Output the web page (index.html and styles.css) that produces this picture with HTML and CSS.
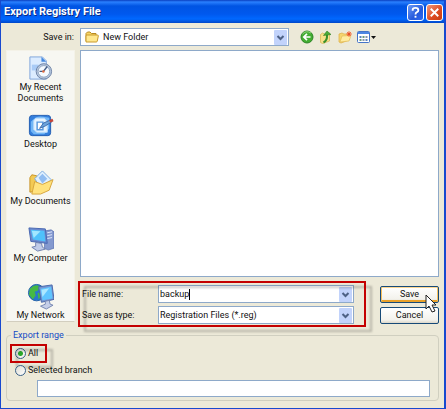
FILE: index.html
```html
<!DOCTYPE html>
<html lang="en">
<head>
<meta charset="utf-8">
<title>Export Registry File</title>
<link rel="stylesheet" href="styles.css">
</head>
<body>
<form class="window">
  <header class="titlebar">
    <h1>Export Registry File</h1>
    <button type="button" class="cap help" aria-label="Help"><svg viewBox="0 0 16 16"><path d="M5 6V5q0-2 3-2t3 2.500q0 1.500-1.500 2.200T8 10" fill="none" stroke="#fff" stroke-width="2"/><path d="M7 11.500h2v2H7z" fill="#fff"/></svg></button>
    <button type="button" class="cap close" aria-label="Close"><svg viewBox="0 0 16 16"><path d="M4 4l8 8M12 4l-8 8" stroke="#fff" stroke-width="2"/></svg></button>
  </header>

  <div class="toolbar">
    <label for="folder">Save in:</label>
    <div class="combo lookin">
      <svg class="folder" viewBox="0 0 14 12"><path d="M1 10V2.500L2.500 1H5l1.500 1.500H11V4" fill="#f7d565" stroke="#b98a22"/><path d="M1 11V5q0-1 1-1h10.500q1 0 .8 1l-1 5q-.2 1-1 1z" fill="#ffe88f" stroke="#c99a2c"/></svg>
      <select id="folder"><option>New Folder</option></select>
      <svg class="arrow" viewBox="0 0 13 15"><rect width="13" height="15" rx="1" fill="#c2d3fb"/><path d="M3.500 6l3 3 3-3" fill="none" stroke="#4d6185" stroke-width="2"/></svg>
    </div>
    <div class="tools">
      <button type="button" aria-label="Back"><svg viewBox="0 0 14 14"><circle cx="7" cy="7" r="6" fill="#43ad32" stroke="#2c8526"/><path d="M2.500 4Q6 0 11 3" fill="none" stroke="#92d87f"/><path d="M10.500 7H4M7 3.800L3.800 7 7 10.200" fill="none" stroke="#fff" stroke-width="1.700"/></svg></button>
      <button type="button" aria-label="Up one level"><svg viewBox="0 0 14 14"><path d="M1.500 4.500l2-1.500 2 1 5-1v8l-7 2.500-2-1z" fill="#f7e08a" stroke="#d9b758" stroke-width=".8"/><path d="M4.500 12.500q4-2 3.500-8" fill="none" stroke="#38902a" stroke-width="2"/><path d="M4.500 5.500L8 1l4 3.500z" fill="#4bab37" stroke="#2d7d22" stroke-width=".6"/></svg></button>
      <button type="button" aria-label="New folder"><svg viewBox="0 0 14 14"><path d="M1 4l3-1 2 1h5v6l-8 3-2-1z" fill="#f5d56e" stroke="#dfb24f" stroke-width=".8"/><path d="M2 12l2-6 9-.5-2 5.500z" fill="#ffec9f" stroke="#e3bb59" stroke-width=".7"/><path d="M11 1v6M8 4h6M9 2l4 4M13 2L9 6" stroke="#f27b4e"/><circle cx="11" cy="4" r="1.500" fill="#e74f28"/></svg></button>
      <button type="button" class="views" aria-label="View menu"><svg viewBox="0 0 19 14"><rect x=".5" y="1.500" width="12" height="11" rx="1" fill="#fff" stroke="#4474c8"/><path d="M1 2h11v2H1z" fill="#4d87e2"/><path d="M2.500 6h2v2h-2zM8.500 9h2v2h-2z" fill="#5a82bd"/><path d="M5.500 6h2v2h-2zM2.500 9h2v2h-2z" fill="#6a9b7c"/><path d="M8.500 6h2v2h-2zM5.500 9h2v2h-2z" fill="#8c97ad"/><path d="M14 6h5l-2.500 3z" fill="#111"/></svg></button>
    </div>
  </div>

  <div class="main">
    <nav class="places">
      <a href="#recent"><svg viewBox="0 0 28 28"><path d="M3 2h13l4 4v19H3z" fill="#dcecff" stroke="#7fa4dc"/><path d="M15 2l5 5h-5z" fill="#4489df"/><path d="M5 10h7v6H5z" fill="#a9cbf6"/><circle cx="17.500" cy="17" r="8" fill="#b6c7de" stroke="#6d82a5"/><circle cx="17.500" cy="17" r="6" fill="#f5faff" stroke="#8fa3bf"/><path d="M21 12l-4 5h-4" fill="none" stroke="#425b84" stroke-width="1.500"/><circle cx="17" cy="17" r="1.300" fill="#e16c41"/></svg><span>My Recent<br>Documents</span></a>
      <a href="#desktop"><svg viewBox="0 0 28 28"><rect x="2.500" y="3.500" width="22" height="21" rx="3" fill="#347fdc" stroke="#205db2"/><path d="M4 10q6-7 13-5l6 1v11l-5 6H7l-3-3z" fill="#72b6f6"/><path d="M9 6.500h9l3 3.500v11H10l-3-3V9z" fill="#e7f4ff" stroke="#b9dcfb"/><path d="M10.500 10.500h6v8h-6z" fill="#fff" stroke="#5898df" stroke-width="1.500"/><path d="M13 17l4-5.500 8-3.500 1 2-7 4.500z" fill="#6da4dc" stroke="#2c5a9c" stroke-width=".8"/><path d="M23 8.500l3.500-1.500 1 2.500-3.500 1.500z" fill="#c6453a"/></svg><span>Desktop</span></a>
      <a href="#documents"><svg viewBox="0 0 28 28"><path d="M3 24V9l2-3 5 1 2 3h10v12z" fill="#f3ca54" stroke="#c89429"/><path d="M8 10l8-8 9 9-10 10z" fill="#e0f0ff" stroke="#79a9df"/><path d="M12 9l4-4 5 5-5 5z" fill="#91bdf2"/><path d="M5 26l3-13 8 3 11-5-4 11-9 4z" fill="#ffe27d" stroke="#d6a43b"/></svg><span>My Documents</span></a>
      <a href="#computer"><svg viewBox="0 0 28 28"><path d="M19 5l6-1 3 2v17l-6 2-4-2z" fill="#8499cf" stroke="#536cac" stroke-width=".7"/><path d="M21 7l5-1M21 10l5-1M21 13l5-1" stroke="#e1e9ff"/><path d="M2 2l17 1 2 15-17-2z" fill="#6c88cd" stroke="#4767b1"/><path d="M4 4l14 1 1 11-13-2z" fill="#4fc1fb"/><path d="M5 5l9 .5-7 7z" fill="#a2e7ff"/><path d="M9 17l6 1 1 4 3 2-8 2-6-4 4-1z" fill="#c1cce9" stroke="#6f80af"/></svg><span>My Computer</span></a>
      <a href="#network"><svg viewBox="0 0 28 28"><circle cx="10" cy="10" r="8.500" fill="#2876cd" stroke="#2362a9"/><path d="M3 6q6-6 11-2l-3 4-3 1 1 4-3 4-4-5zM11 10l5 1-4 6z" fill="#46b944"/><path d="M12 4l14-2 2 15-13 3z" fill="#7596d3" stroke="#4968aa"/><path d="M14 6l11-2 1.500 12L16 18z" fill="#5fc5ff"/><path d="M15 7l8-1.500-7 9z" fill="#ace8ff"/><path d="M19 19l4-1 1 4 3 1-7 4-6-3 5-2z" fill="#c5cee8" stroke="#7687b3"/></svg><span>My Network</span></a>
    </nav>
    <div class="work">
      <div class="files" role="listbox" aria-label="Files"></div>
      <div class="fields">
        <label for="name">File name:</label>
        <div class="combo">
          <input id="name" type="text" value="backup">
          <i class="caret"></i>
          <svg class="arrow" viewBox="0 0 13 15"><rect width="13" height="15" rx="1" fill="#c2d3fb"/><path d="M3.500 6l3 3 3-3" fill="none" stroke="#4d6185" stroke-width="2"/></svg>
        </div>
        <button type="submit" class="push default">Save</button>
        <label for="type">Save as type:</label>
        <div class="combo">
          <select id="type"><option>Registration Files (*.reg)</option></select>
          <svg class="arrow" viewBox="0 0 13 15"><rect width="13" height="15" rx="1" fill="#c2d3fb"/><path d="M3.500 6l3 3 3-3" fill="none" stroke="#4d6185" stroke-width="2"/></svg>
        </div>
        <button type="button" class="push">Cancel</button>
        <span class="mark mark-fields"></span>
        <svg class="cursor" viewBox="0 0 12 19"><path d="M1 1v14l3-3 3 6 3-1-3-6h4z" fill="#fff" stroke="#222"/></svg>
      </div>
    </div>
  </div>

  <fieldset class="range">
    <legend>Export range</legend>
    <label class="radio"><input type="radio" name="range" checked>All<span class="mark mark-all"></span></label>
    <label class="radio"><input type="radio" name="range">Selected branch</label>
    <input class="branch" type="text" aria-label="Branch">
  </fieldset>
</form>
</body>
</html>
```
FILE: styles.css
```css
* { box-sizing: border-box; }

body {
  margin: 0;
  background: #ece9d8;
  color: #111;
  font: 9px/11px Roboto, "Liberation Sans", sans-serif;
}

button, input, select { font: inherit; color: inherit; }

.window {
  display: flex;
  flex-direction: column;
  min-height: 100vh;
  border: solid #1849cf;
  border-width: 0 2px 2px 1px;
}

.titlebar {
  display: flex;
  align-items: center;
  gap: 2px;
  height: 23px;
  padding: 1px 1px 0 3px;
  background: linear-gradient(#0a3fc0, #2a80ff 2px, #0054e3 6px, #0058ee 14px, #0068ff 19px, #0046c8);
}

.titlebar h1 {
  flex: 1;
  margin: 0;
  color: #fff;
  font: bold 11px/16px Roboto, sans-serif;
  text-shadow: 1px 1px #0a2b83;
}

.cap {
  width: 17px;
  height: 17px;
  padding: 0;
  border: 1px solid #fff;
  border-radius: 3px;
}

.cap svg { display: block; width: 15px; height: 15px; }
.help { background: linear-gradient(135deg, #6c9bf6, #2459dc 60%, #2f6af0); }
.close { background: linear-gradient(135deg, #f1977b, #dc4a20 60%, #c83d12); }

.toolbar {
  display: flex;
  align-items: center;
  padding: 5px 4px 4px 5px;
}

.toolbar > label { width: 74px; padding-right: 6px; text-align: right; }

.combo {
  position: relative;
  display: flex;
  align-items: center;
  height: 18px;
  padding-right: 1px;
  border: 1px solid #8ea9c9;
  background: #fff;
}

.combo input, .combo select {
  flex: 1;
  min-width: 0;
  height: 16px;
  padding: 0 1px;
  border: 0;
  background: none;
  outline: 0;
  appearance: none;
}

.lookin { flex: 1; }
.folder { width: 14px; height: 12px; margin: 0 3px 0 4px; }
.arrow { flex: none; width: 13px; height: 15px; pointer-events: none; }

.caret {
  position: absolute;
  left: 30px;
  top: 3px;
  width: 1px;
  height: 11px;
  background: #000;
}

.tools {
  display: flex;
  gap: 5px;
  width: 151px;
  padding-left: 11px;
}

.tools button { padding: 0; border: 0; background: none; }
.tools svg { display: block; width: 14px; height: 14px; }
.tools .views svg { width: 19px; }

.main { display: flex; gap: 5px; padding: 0 5px; }

.places {
  display: flex;
  flex-direction: column;
  width: 69px;
  margin-bottom: 2px;
  padding-top: 4px;
  border: 1px solid #f4f2e8;
  border-bottom-color: #d2cebf;
  background: #f7f7f2;
}

.places a {
  display: flex;
  flex-direction: column;
  align-items: center;
  min-height: 57px;
  color: inherit;
  text-align: center;
  text-decoration: none;
}

.places a:last-child { min-height: 0; }

.places svg { width: 27px; height: 27px; }

.work { display: flex; flex: 1; flex-direction: column; }

.files { flex: 1; border: 1px solid #8ea9c9; background: #fff; }

.fields {
  position: relative;
  display: grid;
  grid-template-columns: 78px 1fr 59px;
  gap: 3px 0;
  align-items: center;
  padding-top: 8px;
}

.fields label { padding-left: 2px; }
.fields .combo { margin-right: 26px; }

.push {
  height: 17px;
  padding: 0;
  border: 1px solid #174a78;
  border-radius: 2px;
  background: linear-gradient(#fff, #f3f2ec 80%, #dcd7ca);
}

.push.default { box-shadow: inset 0 1px #fbd691, inset 1px 0 #f8c05c, inset -1px 0 #f8c05c, inset 0 -2px #e9a12a; }

.mark {
  position: absolute;
  border: 2px solid #c40000;
  filter: drop-shadow(6px 5px 1px rgba(0, 0, 0, .22));
  pointer-events: none;
}

.mark-fields { inset: 4px 73px -3px -2px; }
.mark-all { inset: -4px -9px -4px -5px; }

.cursor {
  position: absolute;
  right: 2px;
  top: 17px;
  width: 12px;
  height: 19px;
}

.range {
  display: flex;
  flex-direction: column;
  align-items: flex-start;
  gap: 6px;
  min-width: 0;
  margin: 6px 5px 7px;
  padding: 7px 8px 3px;
  border: 1px solid #d0cfc0;
  border-radius: 4px;
}

.range legend { padding: 0 2px; margin-left: -4px; color: #1549c5; }

.radio { position: relative; display: flex; align-items: center; gap: 2px; }

.radio input {
  width: 11px;
  height: 11px;
  margin: 0;
  border: 1px solid #3a6087;
  border-radius: 50%;
  background: linear-gradient(135deg, #dcdcd3, #fff);
  appearance: none;
}

.radio input:checked { background: radial-gradient(circle, #2aa72a 2px, #f2f2ed 3px); }

.branch {
  align-self: stretch;
  height: 17px;
  margin: -2px 0 0 22px;
  border: 1px solid #8ea9c9;
  background: #fff;
}
```
